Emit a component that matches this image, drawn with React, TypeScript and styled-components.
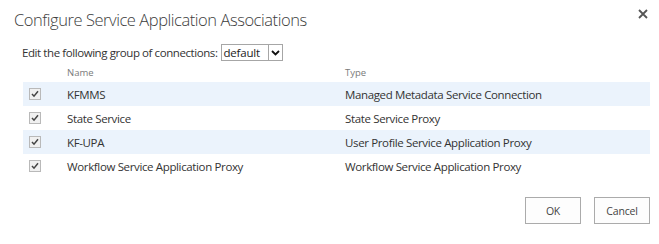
import React from "react";
import styled, { createGlobalStyle } from "styled-components";

const Global = createGlobalStyle`
  html, body { margin: 0; padding: 0; background: #fff; }
  body { font-family: "Open Sans", "Noto Sans", sans-serif; color: #444; }
`;

const Dialog = styled.div`
  width: 659px;
  height: 244px;
  box-sizing: border-box;
  padding: 7px 9px 0 14px;
  display: flex;
  flex-direction: column;
`;

const Header = styled.div`
  display: flex;
  justify-content: space-between;
  align-items: flex-start;
`;

const Title = styled.h1`
  margin: 0;
  font-weight: 300;
  font-size: 16.5px;
  letter-spacing: -0.45px;
  line-height: 25px;
  color: #3c3c3c;
`;

const Close = styled.button`
  border: 0;
  background: none;
  padding: 0;
  margin-top: 2px;
  width: 12px;
  height: 12px;
  display: flex;
  cursor: pointer;
`;

const GroupLine = styled.div`
  margin: 12px 0 0 8px;
  display: flex;
  align-items: center;
  font-size: 11.5px;
  letter-spacing: -0.42px;
  color: #333;
  gap: 3px;
`;

const Select = styled.div`
  display: flex;
  align-items: stretch;
  height: 17px;
  border: 1px solid #a6a6a6;
  box-sizing: border-box;
  width: 62px;
  font-size: 11.5px;
  letter-spacing: -0.2px;
  color: #222;
`;

const SelectValue = styled.span`
  flex: 1;
  padding-left: 2px;
  line-height: 15px;
`;

const SelectArrow = styled.span`
  width: 13px;
  border-left: 1px solid #a6a6a6;
  display: flex;
  align-items: center;
  justify-content: center;
`;

const Table = styled.div`
  margin: 2px 0 0 9px;
  width: 627px;
  display: flex;
  flex-direction: column;
`;

const HeadRow = styled.div`
  display: grid;
  grid-template-columns: 44px 278px 1fr;
  height: 19px;
  align-items: center;
  font-size: 9.5px;
  color: #7a7a7a;
`;

const Row = styled.div<{ $alt?: boolean }>`
  display: grid;
  grid-template-columns: 44px 278px 1fr;
  height: 24px;
  align-items: center;
  font-size: 11.5px;
  letter-spacing: -0.36px;
  color: #333;
  background: ${(p) => (p.$alt ? "#ebf3fc" : "transparent")};
`;

const CheckCell = styled.div`
  padding-left: 6px;
  display: flex;
  align-items: center;
`;

const Check = styled.span`
  width: 10px;
  height: 10px;
  border: 1px solid #b9b9b9;
  background: #f0f0f0;
  display: flex;
  align-items: center;
  justify-content: center;
`;

const Footer = styled.div`
  margin-top: 19px;
  display: flex;
  justify-content: flex-end;
  gap: 13px;
`;

const Button = styled.button`
  height: 27px;
  min-width: 56px;
  padding: 0 10px;
  border: 1px solid #ababab;
  background: #fdfdfd;
  font-family: "Open Sans", "Noto Sans", sans-serif;
  font-size: 10.5px;
  letter-spacing: -0.2px;
  color: #444;
`;

const rows = [
  ["KFMMS", "Managed Metadata Service Connection"],
  ["State Service", "State Service Proxy"],
  ["KF-UPA", "User Profile Service Application Proxy"],
  ["Workflow Service Application Proxy", "Workflow Service Application Proxy"],
];

export default function App() {
  return (
    <>
      <Global />
      <Dialog>
        <Header>
          <Title>Configure Service Application Associations</Title>
          <Close aria-label="Close">
            <svg width="10" height="10" viewBox="0 0 10 10">
              <path d="M1 1L9 9M9 1L1 9" stroke="#555" strokeWidth="1.8" />
            </svg>
          </Close>
        </Header>
        <GroupLine>
          Edit the following group of connections:
          <Select>
            <SelectValue>default</SelectValue>
            <SelectArrow>
              <svg width="9" height="6" viewBox="0 0 9 6">
                <path d="M1 1L4.5 4.5L8 1" stroke="#111" strokeWidth="1.8" fill="none" />
              </svg>
            </SelectArrow>
          </Select>
        </GroupLine>
        <Table>
          <HeadRow>
            <span />
            <span>Name</span>
            <span>Type</span>
          </HeadRow>
          {rows.map(([n, t], i) => (
            <Row key={n} $alt={i % 2 === 0}>
              <CheckCell>
                <Check>
                  <svg width="8" height="8" viewBox="0 0 8 8">
                    <path d="M1 4L3 6.2L7 1.2" stroke="#444" strokeWidth="1.5" fill="none" />
                  </svg>
                </Check>
              </CheckCell>
              <span>{n}</span>
              <span>{t}</span>
            </Row>
          ))}
        </Table>
        <Footer>
          <Button>OK</Button>
          <Button>Cancel</Button>
        </Footer>
      </Dialog>
    </>
  );
}
